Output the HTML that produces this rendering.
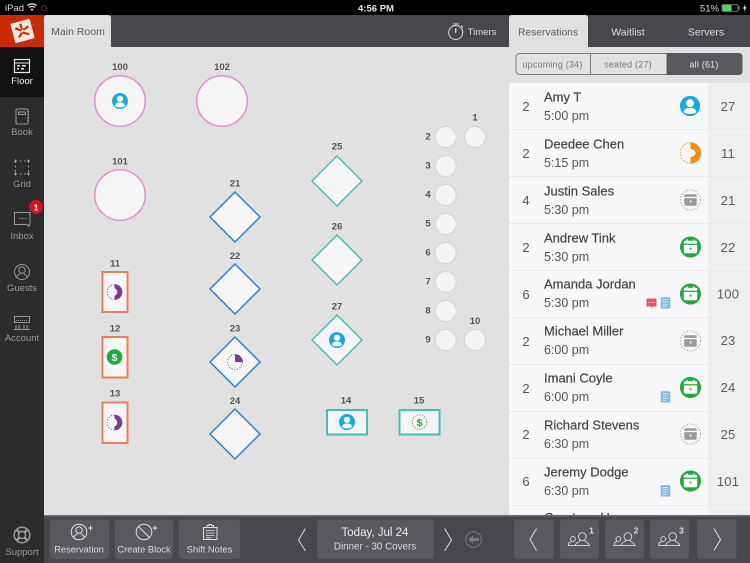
<!DOCTYPE html>
<html><head><meta charset="utf-8"><style>
html,body{margin:0;padding:0;background:#000;width:750px;height:563px;overflow:hidden}
svg{display:block;font-family:"Liberation Sans",sans-serif}
.lb{font-size:9.5px;font-weight:bold;fill:#555;text-anchor:middle}
.s{font-size:9.5px;fill:#9a9a9c;text-anchor:middle}
.b{font-size:9.3px;fill:#dcdcdc;text-anchor:middle}
.n{font-size:13px;fill:#444;stroke:#444;stroke-width:.2px;letter-spacing:0}
.t{font-size:12.5px;fill:#555;letter-spacing:0}
.p{font-size:13px;fill:#555;text-anchor:middle}
.tn{font-size:13px;fill:#5c5c5e;text-anchor:middle;letter-spacing:.2px}
.ln{fill:none;stroke:#9a9a9c;stroke-width:1}
.lw{fill:none;stroke:#dedede;stroke-width:1}
</style></head><body>
<svg width="750" height="563" viewBox="0 0 750 563" xmlns="http://www.w3.org/2000/svg">
<defs>
<symbol id="person" viewBox="-12 -12 24 24" overflow="visible"><circle r="11" fill="#1aa8e2"/><circle cy="-3" r="4.300" fill="#fff"/><path d="M-7 6.500C-6 2.500-3 2 0 2S6 2.500 7 6.500C4.500 9.500-4.500 9.500-7 6.500Z" fill="#fff"/></symbol>
<symbol id="cal" viewBox="-12 -12 24 24" overflow="visible"><circle r="11" fill="#22a83c"/><path d="M-7-3.500V-5Q-7-6.500-5.500-6.500H5.500Q7-6.500 7-5V-3.500ZM-7-2.200H7V5Q7 6.500 5.500 6.500H-5.500Q-7 6.500-7 5Z" fill="#fff"/><rect x="-4.200" y="-8" width="1.300" height="2.500" fill="#fff"/><rect x="2.900" y="-8" width="1.300" height="2.500" fill="#fff"/><rect x="-.8" y=".8" width="1.800" height="1.800" fill="#22a83c"/></symbol>
<symbol id="calg" viewBox="-12 -12 24 24" overflow="visible"><circle r="10.500" fill="#f8f8fa" stroke="#a5a5a8" stroke-width="1" stroke-dasharray="1.600 1.600"/><path d="M-6.500-3.300V-4.800Q-6.500-6-5.200-6H5.200Q6.500-6 6.500-4.800V-3.300ZM-6.500-2H6.500V4.800Q6.500 6 5.200 6H-5.200Q-6.500 6-6.500 4.800Z" fill="#9c9c9f"/><rect x="-.8" y=".6" width="1.800" height="1.800" fill="#f8f8fa"/></symbol>
<symbol id="halfp" viewBox="-12 -12 24 24" overflow="visible"><circle r="7.400" fill="none" stroke="#7a3a97" stroke-width=".8" stroke-dasharray="1.300 1.500"/><path d="M0-7.800A7.800 7.800 0 0 1 0 7.800V3.800C1.500 3.500 2.800 1.800 2.800 0S1.500-3.500 0-3.800Z" fill="#7a3a97"/></symbol>
<symbol id="quart" viewBox="-12 -12 24 24" overflow="visible"><circle r="7.500" fill="none" stroke="#7a3a97" stroke-width=".8" stroke-dasharray="1.300 1.500"/><path d="M0-7.800A7.800 7.800 0 0 1 7.800 0H0Z" fill="#7a3a97"/></symbol>
<symbol id="book" viewBox="-6 -6 12 12" overflow="visible"><rect x="-4.800" y="-5.500" width="9.600" height="11" rx=".8" fill="#7fb6e8"/><path d="M-3-3.300H3M-3-1.100H3M-3 1.100H3M-3 3.300H1" stroke="#e8f2fb" stroke-width=".8"/><path d="M-3.300-6V-4.500M-1.100-6V-4.500M1.100-6V-4.500M3.300-6V-4.500" stroke="#5f9fdc" stroke-width=".6"/></symbol>
<symbol id="party" viewBox="-16 -10 32 20" overflow="visible"><g fill="none" stroke="#dedede"><circle cx="2.500" cy="-3.500" r="4.300"/><path d="M-.5 .5V2C-3 3-5 4-5.500 6.500H10.500C10 4 8 3 5.500 2V.5"/><circle cx="-8" cy="-.8" r="2.700"/><path d="M-9.500 2-12.500 3.500-13 6.500H-5.500"/></g></symbol>
</defs>

<rect width="750" height="563" fill="#000"/>
<text x="5" y="11" font-size="9.500" fill="#ddd">iPad</text>
<path d="M27.500 5.500a7 7 0 0 1 9 0M29 7.500a4.500 4.500 0 0 1 6 0" fill="none" stroke="#eee" stroke-width="1.200"/><path d="M30.500 9.300 32 11l1.500-1.700a2.200 2.200 0 0 0-3 0Z" fill="#eee"/>
<circle cx="44" cy="8" r="2.500" fill="none" stroke="#555" stroke-width="1.200" stroke-dasharray="1 1"/>
<text x="376" y="11.500" font-size="9.500" font-weight="bold" fill="#e8e8e8" text-anchor="middle">4:56 PM</text>
<text x="719" y="11.500" font-size="9.500" fill="#ddd" text-anchor="end">51%</text>
<rect x="722" y="4.500" width="16" height="7" rx="1.500" fill="none" stroke="#888" stroke-width=".8"/><rect x="722.500" y="5" width="9" height="6" fill="#4cd964"/><rect x="738.500" y="6.500" width="1" height="3" fill="#aaa"/><path d="M745.500 4 743 8.500h1.500L744 12l2.500-4.800H745Z" fill="#eee"/>

<rect x="0" y="15" width="44" height="548" fill="#2c2b2e"/>
<rect x="0" y="15" width="44" height="32" fill="#c92b04"/>
<g transform="translate(22.500 31) rotate(-15)"><rect x="-10" y="-10" width="20" height="20" rx="1" fill="#f3e5e0"/><path d="M-1.500-7.500 1-7.500 .7-1.200-1-1.200ZM-7-3.500-5.500-5.500-.8-1.500-1.800 0ZM6.300-4.200 7.300-2 1.500 0 .6-1.500ZM-5.800 4.500-1.500.6-.2 2.200-4.200 6ZM5 5.800-1 2.500.4.700 6.200 3.800Z" fill="#c92b04"/></g>
<rect x="0" y="47" width="44" height="50" fill="#111112"/>
<rect x="14.500" y="59.500" width="15" height="13" fill="none" stroke="#e6e6e6" stroke-width="1.200"/><path d="M15 63H29" stroke="#e6e6e6"/><path d="M17 65h3v1.500h-3zM22 65h4v1.500h-4zM21 68h3v1.500h-3zM17 68h2v1.500h-2z" fill="#e6e6e6"/>
<text x="22" y="84" font-size="9.500" fill="#ececec" text-anchor="middle">Floor</text>
<rect x="16" y="109" width="12" height="15" rx="1.500" class="ln"/><rect x="18.500" y="112" width="7" height="2.500" class="ln"/><path d="M28.500 111v11" stroke="#9a9a9c" stroke-dasharray="1.500 1.500"/>
<text x="22" y="135" class="s">Book</text>
<path d="M15 161H29M15 174H29M15.500 161V174M28.500 161V174" fill="none" stroke="#9a9a9c" stroke-dasharray="2 2.500"/>
<path d="M14 161h3M27 161h3M14 174h3M27 174h3M15.500 159.500v3M28.500 159.500v3M15.500 172.500v3M28.500 172.500v3" stroke="#aaa"/>
<text x="22" y="187" class="s">Grid</text>
<path d="M14.500 212.500H30V224.500H29V226.500L26.500 224.500H14.500Z" class="ln" stroke-linejoin="round"/><path d="M19 218.500h1.200M22 218.500h1.200M25 218.500h1.200" stroke="#aaa"/>
<circle cx="36" cy="207" r="7" fill="#d0121b"/><text x="36" y="210.500" font-size="8.500" font-weight="bold" fill="#f5f5f5" text-anchor="middle">1</text>
<text x="22" y="239" class="s">Inbox</text>
<circle cx="22" cy="272" r="7.500" class="ln"/><circle cx="22" cy="270" r="3.200" class="ln"/><path d="M16.500 277c1-2 3-2.500 3.500-3.500M27.500 277c-1-2-3-2.500-3.500-3.500" class="ln"/>
<text x="22" y="291" class="s">Guests</text>
<rect x="14.500" y="316.500" width="15" height="6" class="ln"/><path d="M16 320.500H28" stroke="#9a9a9c" stroke-dasharray="1 1"/><path d="M14 329.500H30M16 325v4M19 325v4M24 325v4M27 325v4" class="ln"/>
<text x="22" y="341" class="s">Account</text>
<circle cx="22" cy="535" r="7.800" fill="none" stroke="#9a9a9c" stroke-width="1.500"/><circle cx="22" cy="535" r="3.500" fill="none" stroke="#9a9a9c" stroke-width="1.500"/><path d="M16.500 529.500 19.500 532.500M27.500 529.500 24.500 532.500M16.500 540.500 19.500 537.500M27.500 540.500 24.500 537.500" stroke="#9a9a9c" stroke-width="2.500"/>
<text x="22" y="555" class="s">Support</text>

<rect x="44" y="15" width="465" height="32" fill="#47484b"/>
<path d="M44 47V18Q44 15 47 15H108Q111 15 111 18V47Z" fill="#e1e1e1"/>
<text x="78" y="35" font-size="10.500" fill="#5c5c5e" text-anchor="middle">Main Room</text>
<circle cx="455.700" cy="32.500" r="7" fill="none" stroke="#dedede"/><path d="M455.700 28.500v4.500" stroke="#dedede" stroke-width="1.300"/><path d="M453.500 24h5M461 25.500l2 2" stroke="#dedede"/>
<text x="482" y="35" font-size="9.500" fill="#dcdcdc" text-anchor="middle">Timers</text>
<rect x="44" y="47" width="465" height="469" fill="#e1e1e1"/>

<g fill="#f6f6f7" stroke="#e08fd0" stroke-width="1.500"><circle cx="120" cy="101" r="25.300"/><circle cx="222" cy="101" r="25.300"/><circle cx="120" cy="195" r="25.300"/></g>
<g class="lb"><text x="120" y="70" class="lb">100</text><text x="222" y="70" class="lb">102</text><text x="120" y="164.500" class="lb">101</text>
<text x="235" y="186.500" class="lb">21</text><text x="235" y="259" class="lb">22</text><text x="235" y="331.500" class="lb">23</text><text x="235" y="404" class="lb">24</text>
<text x="337" y="149.500" class="lb">25</text><text x="337" y="229.500" class="lb">26</text><text x="337" y="309.500" class="lb">27</text>
<text x="115" y="266.500" class="lb">11</text><text x="115" y="331.500" class="lb">12</text><text x="115" y="396.500" class="lb">13</text>
<text x="346" y="403.500" class="lb">14</text><text x="419" y="403.500" class="lb">15</text>
<text x="475" y="120.500" class="lb">1</text><text x="475" y="324" class="lb">10</text>
<text x="428" y="139.500" class="lb">2</text><text x="428" y="168.500" class="lb">3</text><text x="428" y="197.500" class="lb">4</text><text x="428" y="226.500" class="lb">5</text><text x="428" y="255.500" class="lb">6</text><text x="428" y="284.500" class="lb">7</text><text x="428" y="313.500" class="lb">8</text><text x="428" y="342.500" class="lb">9</text></g>
<g fill="#f6f6f7" stroke="#2a7fd6" stroke-width="1.500"><path d="M235 192 260 217 235 242 210 217Z"/><path d="M235 264 260 289 235 314 210 289Z"/><path d="M235 337 260 362 235 387 210 362Z"/><path d="M235 409 260 434 235 459 210 434Z"/></g>
<g fill="#f6f6f7" stroke="#45bfb5" stroke-width="1.500"><path d="M337 156 362 181 337 206 312 181Z"/><path d="M337 235 362 260 337 285 312 260Z"/><path d="M337 315 362 340 337 365 312 340Z"/></g>
<g fill="#f6f6f7" stroke="#ee7d5a" stroke-width="2"><rect x="102.500" y="272" width="25" height="40"/><rect x="102.500" y="337" width="25" height="40.500"/><rect x="102.500" y="402.500" width="25" height="40.500"/></g>
<g fill="#f6f6f7" stroke="#45bfb5" stroke-width="2"><rect x="327" y="410" width="40" height="24.500"/><rect x="399.500" y="410" width="40" height="24.500"/></g>
<g fill="#f4f4f5" stroke="#d4d4d4" stroke-width="1"><circle cx="445.700" cy="137" r="10.500"/><circle cx="475" cy="137" r="10.500"/><circle cx="445.700" cy="166" r="10.500"/><circle cx="445.700" cy="195" r="10.500"/><circle cx="445.700" cy="224" r="10.500"/><circle cx="445.700" cy="253" r="10.500"/><circle cx="445.700" cy="282" r="10.500"/><circle cx="445.700" cy="311" r="10.500"/><circle cx="445.700" cy="340" r="10.500"/><circle cx="475" cy="340" r="10.500"/></g>
<use href="#person" x="111.300" y="92.300" width="17.400" height="17.400"/>
<use href="#person" x="328.300" y="331.300" width="17.400" height="17.400"/>
<use href="#person" x="338.300" y="413.300" width="17.400" height="17.400"/>
<use href="#halfp" x="102.500" y="280" width="24" height="24"/>
<use href="#halfp" x="102.500" y="410.500" width="24" height="24"/>
<use href="#quart" x="223" y="350" width="24" height="24"/>
<circle cx="114.500" cy="357" r="7.800" fill="#22a83c"/><text x="114.500" y="360.800" font-size="10.500" font-weight="bold" fill="#fff" text-anchor="middle">$</text>
<circle cx="419.500" cy="422" r="7.300" fill="none" stroke="#22a83c" stroke-width=".8" stroke-dasharray="1.300 1.300"/><text x="419.500" y="425.800" font-size="10.500" font-weight="bold" fill="#22a83c" text-anchor="middle">$</text>

<rect x="509" y="15" width="241" height="32" fill="#47484b"/>
<path d="M509 47V18Q509 15 512 15H585Q588 15 588 18V47Z" fill="#e1e1e1"/>
<text x="548" y="35.500" font-size="10.300" fill="#5c5c5e" text-anchor="middle">Reservations</text>
<text x="628" y="35.500" font-size="10.500" fill="#dedede" text-anchor="middle">Waitlist</text>
<text x="706" y="35.500" font-size="10.500" fill="#dedede" text-anchor="middle">Servers</text>
<rect x="509" y="47" width="241" height="469" fill="#f8f8fa"/>
<rect x="509" y="47" width="241" height="36" fill="#e1e1e1"/>
<rect x="516" y="53.500" width="226" height="21" rx="3.500" fill="#e1e1e1" stroke="#7d7d80"/>
<path d="M666.500 53H738.500Q742.500 53 742.500 57V71Q742.500 75 738.500 75H666.500Z" fill="#58595c"/>
<path d="M590.500 54V74" stroke="#7d7d80"/>
<text x="552.500" y="67.500" font-size="9" fill="#77777a" text-anchor="middle" letter-spacing=".2">upcoming (34)</text>
<text x="628" y="67.500" font-size="9" fill="#77777a" text-anchor="middle" letter-spacing=".2">seated (27)</text>
<text x="704" y="67.500" font-size="9" fill="#e6e6e6" text-anchor="middle" letter-spacing=".2">all (61)</text>
<rect x="708" y="83" width="42" height="433" fill="#efeff1"/>
<g stroke="#e9e9eb" stroke-width="1"><path d="M509 129.500H750M509 176.500H750M509 223.500H750M509 270.500H750M509 317.500H750M509 364.500H750M509 411.500H750M509 458.500H750M509 505.500H750"/></g>

<g>
<text x="526" y="111" class="p">2</text><text x="544" y="101.500" class="n">Amy T</text><text x="544" y="120" class="t">5:00 pm</text><text x="728" y="111" class="tn">27</text>
<text x="526" y="158" class="p">2</text><text x="544" y="148.500" class="n">Deedee Chen</text><text x="544" y="167" class="t">5:15 pm</text><text x="728" y="158" class="tn">11</text>
<text x="526" y="205" class="p">4</text><text x="544" y="195.500" class="n">Justin Sales</text><text x="544" y="214" class="t">5:30 pm</text><text x="728" y="205" class="tn">21</text>
<text x="526" y="252" class="p">2</text><text x="544" y="242.500" class="n">Andrew Tink</text><text x="544" y="261" class="t">5:30 pm</text><text x="728" y="252" class="tn">22</text>
<text x="526" y="299" class="p">6</text><text x="544" y="288.500" class="n">Amanda Jordan</text><text x="544" y="307" class="t">5:30 pm</text><text x="728" y="298.500" class="tn">100</text>
<text x="526" y="346" class="p">2</text><text x="544" y="335.500" class="n">Michael Miller</text><text x="544" y="354" class="t">6:00 pm</text><text x="728" y="345" class="tn">23</text>
<text x="526" y="393" class="p">2</text><text x="544" y="382.500" class="n">Imani Coyle</text><text x="544" y="401" class="t">6:00 pm</text><text x="728" y="392" class="tn">24</text>
<text x="526" y="439" class="p">2</text><text x="544" y="429.500" class="n">Richard Stevens</text><text x="544" y="448" class="t">6:30 pm</text><text x="728" y="439" class="tn">25</text>
<text x="526" y="486" class="p">6</text><text x="544" y="476.500" class="n">Jeremy Dodge</text><text x="544" y="495" class="t">6:30 pm</text><text x="728" y="486" class="tn">101</text>
<text x="544" y="522" class="n">Courtney Hu</text>
</g>
<use href="#person" x="679" y="95" width="22" height="22"/>
<circle cx="690.500" cy="153" r="10.300" fill="none" stroke="#f28c1e" stroke-width=".9" stroke-dasharray="1.600 1.600"/>
<path d="M690.500 142.500A10.500 10.500 0 0 1 690.500 163.500V157C693 157 695.500 155 695.500 153S693 149 690.500 149Z" fill="#f28c1e"/>
<use href="#calg" x="679" y="188.500" width="23" height="23"/>
<use href="#cal" x="679" y="235.500" width="23" height="23"/>
<use href="#cal" x="679" y="282.500" width="23" height="23"/>
<use href="#calg" x="679" y="329.500" width="23" height="23"/>
<use href="#cal" x="679" y="376" width="23" height="23"/>
<use href="#calg" x="679" y="422.500" width="23" height="23"/>
<use href="#cal" x="679" y="469.500" width="23" height="23"/>
<path d="M646.500 298.500H656.500V306.500H652.500L651.500 308L650.500 306.500H646.500Z" fill="#e2546c"/><path d="M648.500 302.500h1.200M651 302.500h1.200M653.500 302.500h1.200" stroke="#fff" stroke-width="1"/>
<use href="#book" x="659.500" y="297" width="12" height="12"/>
<use href="#book" x="659.500" y="391" width="12" height="12"/>
<use href="#book" x="659.500" y="485" width="12" height="12"/>

<rect x="44" y="516" width="706" height="47" fill="#47484b"/>
<rect x="44" y="515" width="706" height="1.500" fill="#6c6d70"/>
<g fill="#58595c"><rect x="50" y="519.500" width="59" height="39.500" rx="3"/><rect x="115" y="519.500" width="58" height="39.500" rx="3"/><rect x="179" y="519.500" width="61" height="39.500" rx="3"/><rect x="317" y="519.500" width="116.500" height="39.500" rx="3"/><rect x="514" y="519.500" width="39.500" height="39.500" rx="3"/><rect x="560" y="519.500" width="39" height="39.500" rx="3"/><rect x="605" y="519.500" width="39" height="39.500" rx="3"/><rect x="650" y="519.500" width="39" height="39.500" rx="3"/><rect x="697" y="519.500" width="39.500" height="39.500" rx="3"/></g>
<circle cx="79" cy="532" r="7.800" class="lw"/><circle cx="79" cy="530" r="3.200" class="lw"/><path d="M73.500 537.500c1-2.500 3-2.500 3.500-4M84.500 537.500c-1-2.500-3-2.500-3.500-4" class="lw"/><path d="M88 528h5M90.500 525.500v5" class="lw" stroke-width="1.200"/>
<text x="79" y="552.500" class="b">Reservation</text>
<circle cx="144" cy="532" r="7.800" class="lw"/><path d="M138.500 526.500 149.500 537.500" class="lw"/><path d="M152.500 528h5M155 525.500v5" class="lw" stroke-width="1.200"/>
<text x="144" y="552.500" class="b">Create Block</text>
<path d="M203.500 527.500H217V539.500H203.500Z" class="lw"/><path d="M207 527.500V525.500H209V524.500H211.500V525.500H213.500V527.500Z" fill="#58595c" stroke="#dedede"/><path d="M206 530.500H214.500M206 533H214.500M206 535.500H214.500M206 537.800H211" stroke="#dedede" stroke-width=".8"/>
<text x="209.500" y="552.500" class="b">Shift Notes</text>
<path d="M305.500 528.500 298.500 540 305.500 551" fill="none" stroke="#dedede" stroke-width="1"/>
<path d="M444.500 528.500 451.500 540 444.500 551" fill="none" stroke="#dedede" stroke-width="1"/>
<text x="375" y="536" font-size="11.500" fill="#eee" text-anchor="middle">Today, Jul 24</text>
<text x="375" y="549.500" font-size="9.800" fill="#dcdcdc" text-anchor="middle">Dinner - 30 Covers</text>
<circle cx="473.500" cy="539.500" r="7.800" fill="none" stroke="#77787b"/><path d="M468 539.500 473 535.500V538H479V541H473V543.500Z" fill="#77787b"/>
<path d="M536.500 528.500 530 539.500 536.500 550.500" fill="none" stroke="#dedede"/>
<path d="M714 528.500 720.500 539.500 714 550.500" fill="none" stroke="#dedede"/>
<use href="#party" x="565.700" y="530.700" width="28.800" height="18"/><text x="591.500" y="533.500" font-size="8.500" font-weight="bold" fill="#dedede" text-anchor="middle">1</text>
<use href="#party" x="611.200" y="530.700" width="28.800" height="18"/><text x="636" y="533.500" font-size="8.500" font-weight="bold" fill="#dedede" text-anchor="middle">2</text>
<use href="#party" x="656" y="530.700" width="28.800" height="18"/><text x="681.500" y="533.500" font-size="8.500" font-weight="bold" fill="#dedede" text-anchor="middle">3</text>
</svg>
</body></html>
